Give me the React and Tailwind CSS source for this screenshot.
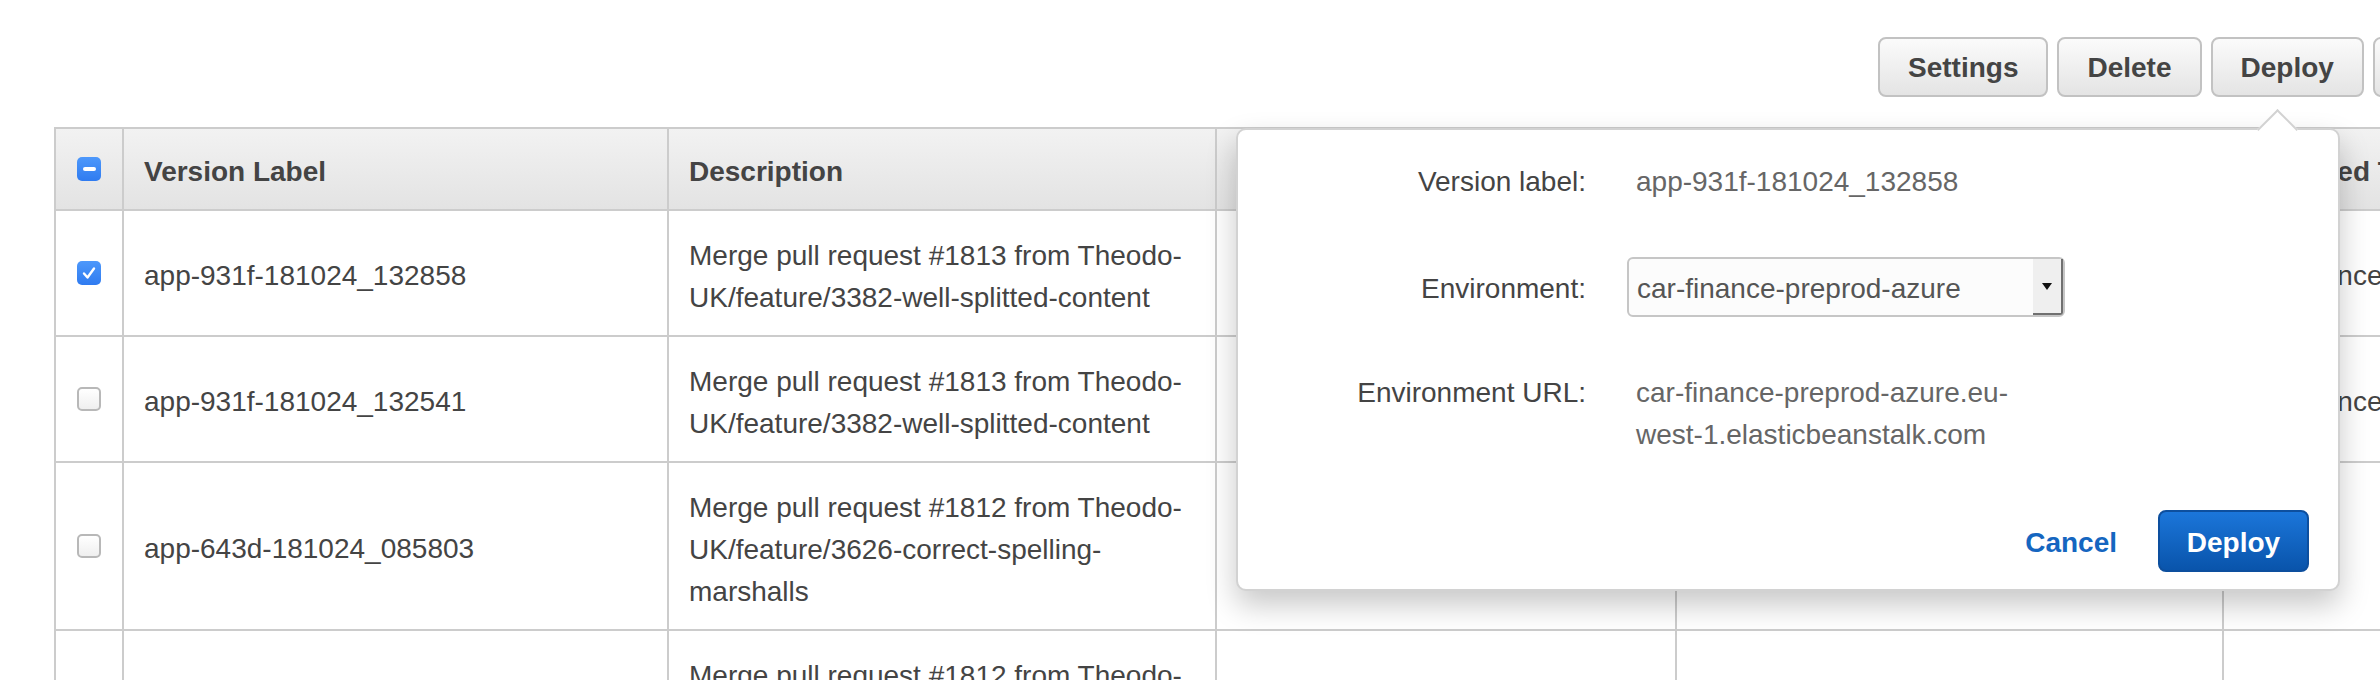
import React from "react";

function Box({ state }) {
  if (state === "none") {
    return (
      <div className="w-[24px] h-[24px] rounded-[5px] border-2 border-[#b8b8b8] bg-gradient-to-b from-white to-[#efefef]" />
    );
  }
  return (
    <div className="w-[24px] h-[24px] rounded-[5px] bg-gradient-to-b from-[#4d98fb] to-[#2f7bf0] flex items-center justify-center">
      {state === "mixed" ? (
        <div className="w-[13px] h-[4px] rounded-[2px] bg-white" />
      ) : (
        <svg width="16" height="16" viewBox="0 0 16 16">
          <path d="M3 8.5 L6.5 12.5 L13 3.5" fill="none" stroke="white" strokeWidth="2.4" strokeLinecap="round" strokeLinejoin="round" />
        </svg>
      )}
    </div>
  );
}

const cols = "grid grid-cols-[70px_545px_548px_460px_547px_630px]";

function Cell({ children, first, className = "" }) {
  return (
    <div
      className={
        "flex items-center border-r-2 border-b-2 border-[#cccccc] " +
        (first ? "border-l-2 justify-center " : "px-[20px] ") +
        className
      }
    >
      {children}
    </div>
  );
}

const rows = [
  {
    state: "checked",
    label: "app-931f-181024_132858",
    desc: ["Merge pull request #1813 from Theodo-", "UK/feature/3382-well-splitted-content"],
    env: "car-finance-preprod-azure",
  },
  {
    state: "none",
    label: "app-931f-181024_132541",
    desc: ["Merge pull request #1813 from Theodo-", "UK/feature/3382-well-splitted-content"],
    env: "car-finance-preprod-azure",
  },
  {
    state: "none",
    label: "app-643d-181024_085803",
    desc: ["Merge pull request #1812 from Theodo-", "UK/feature/3626-correct-spelling-", "marshalls"],
    env: "",
  },
  {
    state: "none",
    label: "app-643d-181024_085520",
    desc: ["Merge pull request #1812 from Theodo-", "UK/feature/3626-correct-spelling-", "marshalls"],
    env: "",
  },
];

function ToolButton({ children }) {
  return (
    <button className="h-[60px] px-[28px] pt-[2px] shrink-0 rounded-[8px] border-2 border-[#c2c2c2] bg-gradient-to-b from-[#fbfbfb] to-[#e4e4e4] text-[28px] font-bold text-[#444] whitespace-nowrap">
      {children}
    </button>
  );
}

const head = "border-t-2 bg-gradient-to-b from-[#f2f2f2] to-[#e3e3e3] pt-[5px]";

export default function App() {
  return (
    <div className="w-[2380px] h-[680px] overflow-hidden bg-white font-['Liberation_Sans',Arial,sans-serif] text-[#444]">
      <div className="w-[2800px]">
        <div className="flex gap-[9px] pt-[37px] pl-[1878px]">
          <ToolButton>Settings</ToolButton>
          <ToolButton>Delete</ToolButton>
          <ToolButton>Deploy</ToolButton>
          <ToolButton>Actions</ToolButton>
        </div>

        <div className="relative mt-[30px] ml-[54px]">
          {/* header */}
          <div className={cols + " h-[84px] text-[28px] font-bold"}>
            <Cell first className="border-t-2 bg-gradient-to-b from-[#f2f2f2] to-[#e3e3e3]">
              <Box state="mixed" />
            </Cell>
            <Cell className={head}>Version Label</Cell>
            <Cell className={head}>Description</Cell>
            <Cell className={head}>Date Created</Cell>
            <Cell className={head}>Source</Cell>
            <Cell className={head + " whitespace-nowrap"}>Deployed To</Cell>
          </div>
          {rows.map((r, i) => (
            <div key={i} className={cols + " text-[28px] leading-[42px]"}>
              <Cell first>
                <Box state={r.state} />
              </Cell>
              <Cell className="pt-[6px]">{r.label}</Cell>
              <Cell className="pt-[24px] pb-[16px]">
                <div>
                  {r.desc.map((d, j) => (
                    <div key={j}>{d}</div>
                  ))}
                </div>
              </Cell>
              <Cell />
              <Cell />
              <Cell className="whitespace-nowrap pt-[6px]">{r.env}</Cell>
            </div>
          ))}

          {/* popover */}
          <div className="absolute left-[1182px] top-[1px] w-[1104px] z-10 bg-white border-2 border-[#d2d2d2] rounded-[10px] shadow-[0_14px_30px_rgba(0,0,0,0.22)]">
            <div className="absolute top-[-15px] left-[1025px] w-[29px] h-[29px] rotate-45 bg-white border-l-2 border-t-2 border-[#d2d2d2]" />
            <div className="relative flex flex-col pt-[31px] pb-[17px] pr-[29px] text-[28px] leading-[42px]">
              <div className="flex">
                <div className="w-[348px] text-right text-[#444]">Version label:</div>
                <div className="ml-[50px] text-[#666]">app-931f-181024_132858</div>
              </div>
              <div className="flex items-center mt-[54px]">
                <div className="w-[348px] text-right text-[#444] pt-[3px]">Environment:</div>
                <div className="ml-[41px] w-[438px] h-[60px] flex items-stretch rounded-[6px] border-2 border-[#c6c6c6] bg-[#fcfcfc]">
                  <div className="flex-1 flex items-center pl-[8px] pt-[3px] text-[#555]">car-finance-preprod-azure</div>
                  <div className="w-[30px] flex items-center justify-center bg-[#efefef] border-r-2 border-b-2 border-[#707070] rounded-br-[3px]">
                    <svg width="10" height="7" viewBox="0 0 10 7">
                      <path d="M0 0 H10 L5 7 Z" fill="#111" />
                    </svg>
                  </div>
                </div>
              </div>
              <div className="flex mt-[55px]">
                <div className="w-[348px] text-right text-[#444]">Environment URL:</div>
                <div className="ml-[50px] text-[#666]">
                  <div>car-finance-preprod-azure.eu-</div>
                  <div>west-1.elasticbeanstalk.com</div>
                </div>
              </div>
              <div className="flex items-center justify-end mt-[54px] gap-[41px]">
                <span className="font-bold text-[#1566c0] pt-[3px]">Cancel</span>
                <button className="w-[151px] h-[62px] pt-[3px] rounded-[8px] border-2 border-[#0d4f9e] bg-gradient-to-b from-[#1b76da] to-[#0954ab] text-white font-bold">
                  Deploy
                </button>
              </div>
            </div>
          </div>
        </div>
      </div>
    </div>
  );
}
